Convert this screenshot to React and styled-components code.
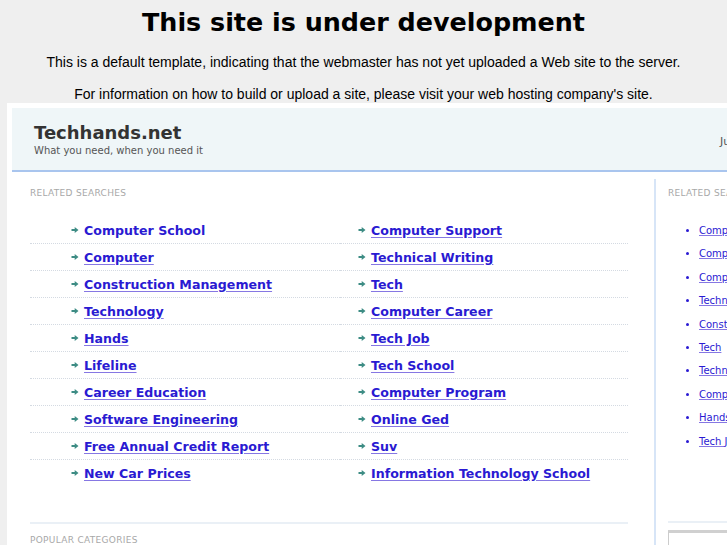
import React from 'react'
import styled, { createGlobalStyle } from 'styled-components'

const GlobalStyle = createGlobalStyle`
  html, body {
    margin: 0;
    padding: 0;
    background: #efefef;
    overflow: hidden;
  }
`

const Notice = styled.div`
  text-align: center;
  padding-top: 6px;
  height: 97px;
`

const Title = styled.h1`
  margin: 0;
  font-family: 'DejaVu Sans', sans-serif;
  font-weight: bold;
  font-size: 25.4px;
  line-height: 32px;
  color: #000;
`

const Note = styled.p`
  margin: ${(p) => p.$top}px 0 0;
  font-family: 'Liberation Sans', Arial, sans-serif;
  font-size: 14px;
  line-height: 18px;
  color: #000;
`

const Page = styled.div`
  margin-left: 7px;
  width: 980px;
  background: #fff;
  padding: 5px 5px 0;
  height: 600px;
`

const Header = styled.header`
  display: flex;
  align-items: center;
  background: #eff6f8;
  border-bottom: 2px solid #a9c5ee;
  height: 62px;
  padding-left: 22px;
  font-family: 'DejaVu Sans', sans-serif;
`

const Brand = styled.div`
  flex: 0 0 686px;
  padding-top: 2px;
`

const SiteName = styled.div`
  font-size: 18px;
  font-weight: bold;
  color: #333;
  line-height: 22px;
`

const Tagline = styled.div`
  font-size: 10px;
  color: #555;
  line-height: 14px;
`

const Side = styled.div`
  font-size: 11px;
  color: #555;
  padding-top: 4px;
`

const Body = styled.div`
  display: flex;
  font-family: 'DejaVu Sans', sans-serif;
`

const Main = styled.main`
  width: 598px;
  padding: 8px 26px 0 18px;
  border-right: 2px solid #d7e5f7;
  margin-top: 7px;
`

const Label = styled.div`
  font-size: 9px;
  letter-spacing: 0.3px;
  color: #a8a8a8;
  text-transform: uppercase;
  line-height: 12px;
  margin-top: ${(p) => p.$top || 0}px;
`

const Grid = styled.div`
  display: grid;
  grid-template-columns: 310px 288px;
  margin-top: 18px;
`

const Cell = styled.div`
  display: flex;
  align-items: center;
  gap: 5px;
  height: 26px;
  padding-left: ${(p) => p.$indent}px;
  border-bottom: 1px dotted ${(p) => (p.$last ? 'transparent' : '#d4dae2')};
`

const Link = styled.a`
  font-size: 12.6px;
  font-weight: bold;
  color: #2a1ad2;
  text-decoration: ${(p) => (p.$plain ? 'none' : 'underline')};
  text-decoration-color: #8677e3;
  text-underline-offset: 2px;
  cursor: pointer;
`

const Rule = styled.div`
  height: 2px;
  background: #eaf0f6;
  margin-top: ${(p) => p.$top}px;
`

const Aside = styled.aside`
  padding: 8px 0 0 12px;
  width: 280px;
  margin-top: 7px;
`

const SideList = styled.ul`
  margin: 20px 0 0;
  padding: 0 0 0 31px;
  list-style: disc;
  color: #2a1ad2;
`

const SideItem = styled.li`
  height: 23.4px;
  font-size: 10px;
  line-height: 23.4px;
`

const SideLink = styled.a`
  color: #2a1ad2;
  text-decoration: underline;
  text-decoration-color: #8677e3;
  cursor: pointer;
`

const SearchBox = styled.div`
  margin-top: 7px;
  height: 30px;
  border: 1px solid #ccc;
  border-top-width: 3px;
  border-top-color: #d0d0d0;
`

const Arrow = () => (
  <svg width="8" height="8" viewBox="0 0 8 8">
    <path d="M0.5 3h3.2V1l3.8 3-3.8 3V5H0.5z" fill="#3d8c84" />
  </svg>
)

const left = [
  'Computer School',
  'Computer',
  'Construction Management',
  'Technology',
  'Hands',
  'Lifeline',
  'Career Education',
  'Software Engineering',
  'Free Annual Credit Report',
  'New Car Prices',
]

const right = [
  'Computer Support',
  'Technical Writing',
  'Tech',
  'Computer Career',
  'Tech Job',
  'Tech School',
  'Computer Program',
  'Online Ged',
  'Suv',
  'Information Technology School',
]

const sideLinks = [
  'Computer Support',
  'Computer School',
  'Computer Career',
  'Technical Writing',
  'Construction Management',
  'Tech',
  'Technology',
  'Computer Program',
  'Hands',
  'Tech Job',
]

const App = () => (
  <>
    <GlobalStyle />
    <Notice>
      <Title>This site is under development</Title>
      <Note $top={15}>
        This is a default template, indicating that the webmaster has not yet uploaded a Web site to the server.
      </Note>
      <Note $top={14}>
        For information on how to build or upload a site, please visit your web hosting company's site.
      </Note>
    </Notice>
    <Page>
      <Header>
        <Brand>
          <SiteName>Techhands.net</SiteName>
          <Tagline>What you need, when you need it</Tagline>
        </Brand>
        <Side>June 2013</Side>
      </Header>
      <Body>
        <Main>
          <Label>Related Searches</Label>
          <Grid>
            {left.map((item, i) => {
              const last = i === left.length - 1
              return (
                <React.Fragment key={item}>
                  <Cell $indent={41} $last={last}>
                    <Arrow />
                    <Link $plain={i === 0}>{item}</Link>
                  </Cell>
                  <Cell $indent={18} $last={last}>
                    <Arrow />
                    <Link>{right[i]}</Link>
                  </Cell>
                </React.Fragment>
              )
            })}
          </Grid>
          <Rule $top={35} />
          <Label $top={10}>Popular Categories</Label>
        </Main>
        <Aside>
          <Label>Related Searches</Label>
          <SideList>
            {sideLinks.map((item) => (
              <SideItem key={item}>
                <SideLink>{item}</SideLink>
              </SideItem>
            ))}
          </SideList>
          <Rule $top={68} />
          <SearchBox />
        </Aside>
      </Body>
    </Page>
  </>
)

export default App
